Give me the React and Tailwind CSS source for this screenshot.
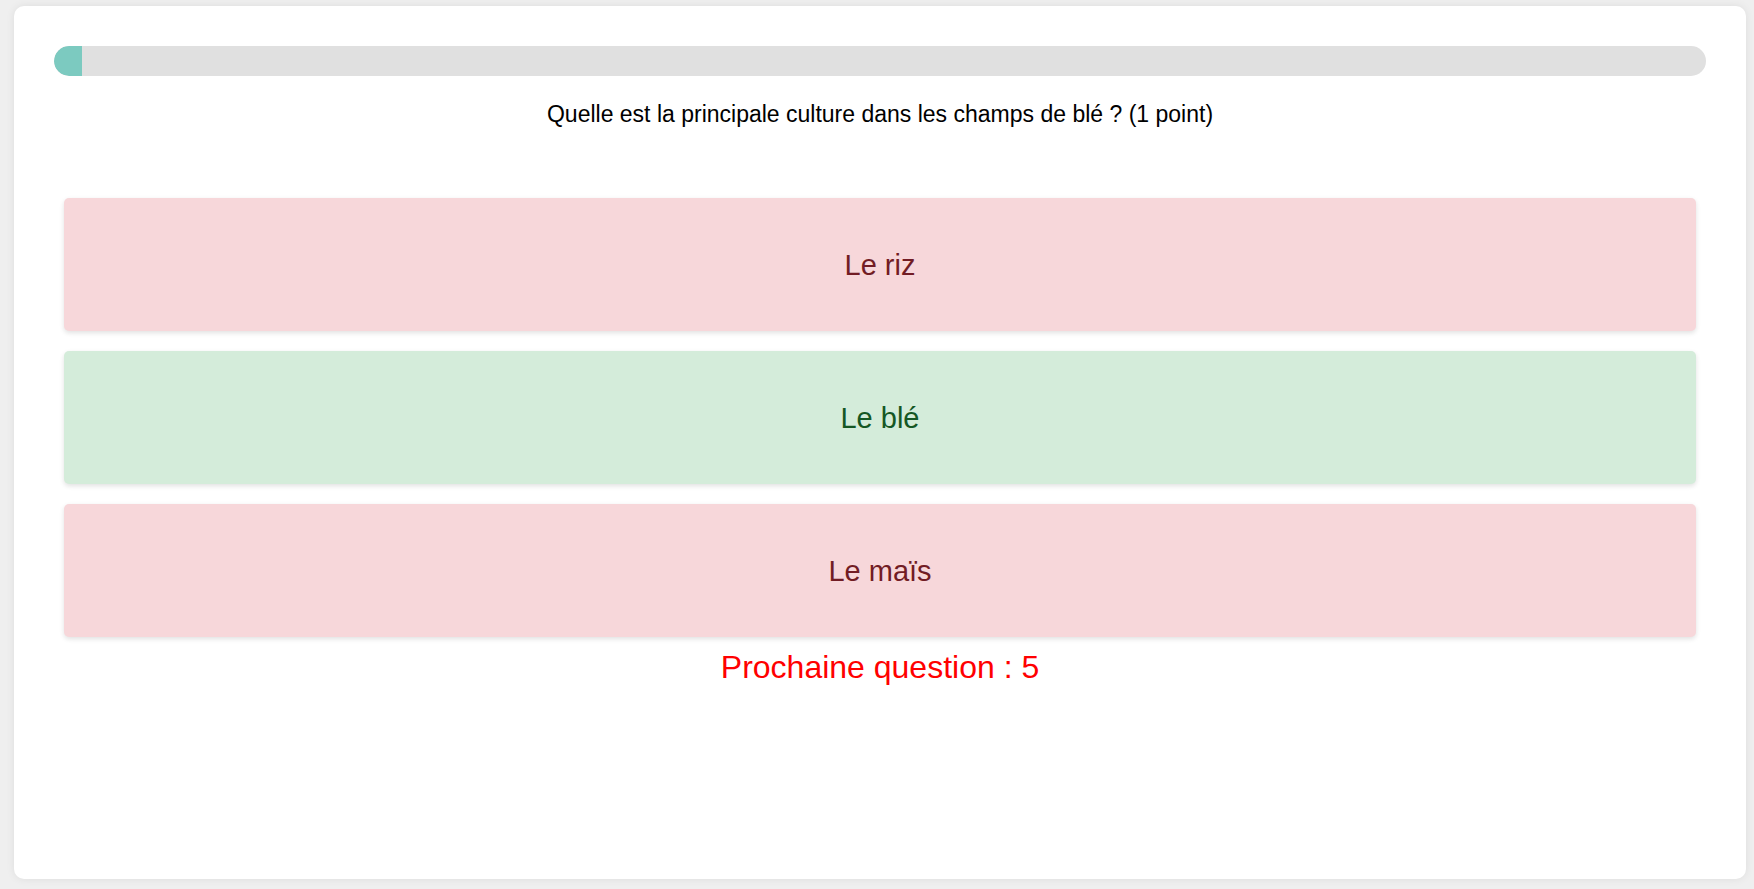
const options = [
  { label: 'Le riz', ok: false },
  { label: 'Le blé', ok: true },
  { label: 'Le maïs', ok: false },
];

const App = () => {
  return (
    <div className="min-h-screen bg-[#efefef] pt-[6px] pl-[14px] pr-[8px] pb-[10px] font-['Liberation_Sans',Arial,sans-serif]">
      <div className="h-[873px] bg-white rounded-[10px] shadow-[0_0_8px_rgba(0,0,0,0.08)] p-10">
        {/* progress */}
        <div className="h-[30px] rounded-full bg-[#e0e0e0] overflow-hidden">
          <div className="h-full w-[28px] bg-[#7ccac0] rounded-l-full"></div>
        </div>

        <p className="mt-[25px] text-center text-[23px] leading-[26px] text-black">
          Quelle est la principale culture dans les champs de blé ? (1 point)
        </p>

        <div className="mx-[10px] mt-[71px] flex flex-col gap-5">
          {options.map((opt) => (
            <div
              key={opt.label}
              className={
                opt.ok
                  ? 'h-[133px] pt-[2px] flex items-center justify-center rounded-[5px] bg-[#d4ecda] text-[#155724] text-[29px] shadow-[0_2px_5px_rgba(0,0,0,0.12)]'
                  : 'h-[133px] pt-[2px] flex items-center justify-center rounded-[5px] bg-[#f7d7da] text-[#721c24] text-[29px] shadow-[0_2px_5px_rgba(0,0,0,0.12)]'
              }
            >
              {opt.label}
            </div>
          ))}
        </div>

        <p className="mt-[12px] text-center text-[32px] leading-[37px] text-[#ff0000]">
          Prochaine question : 5
        </p>
      </div>
    </div>
  );
};

export default App;
